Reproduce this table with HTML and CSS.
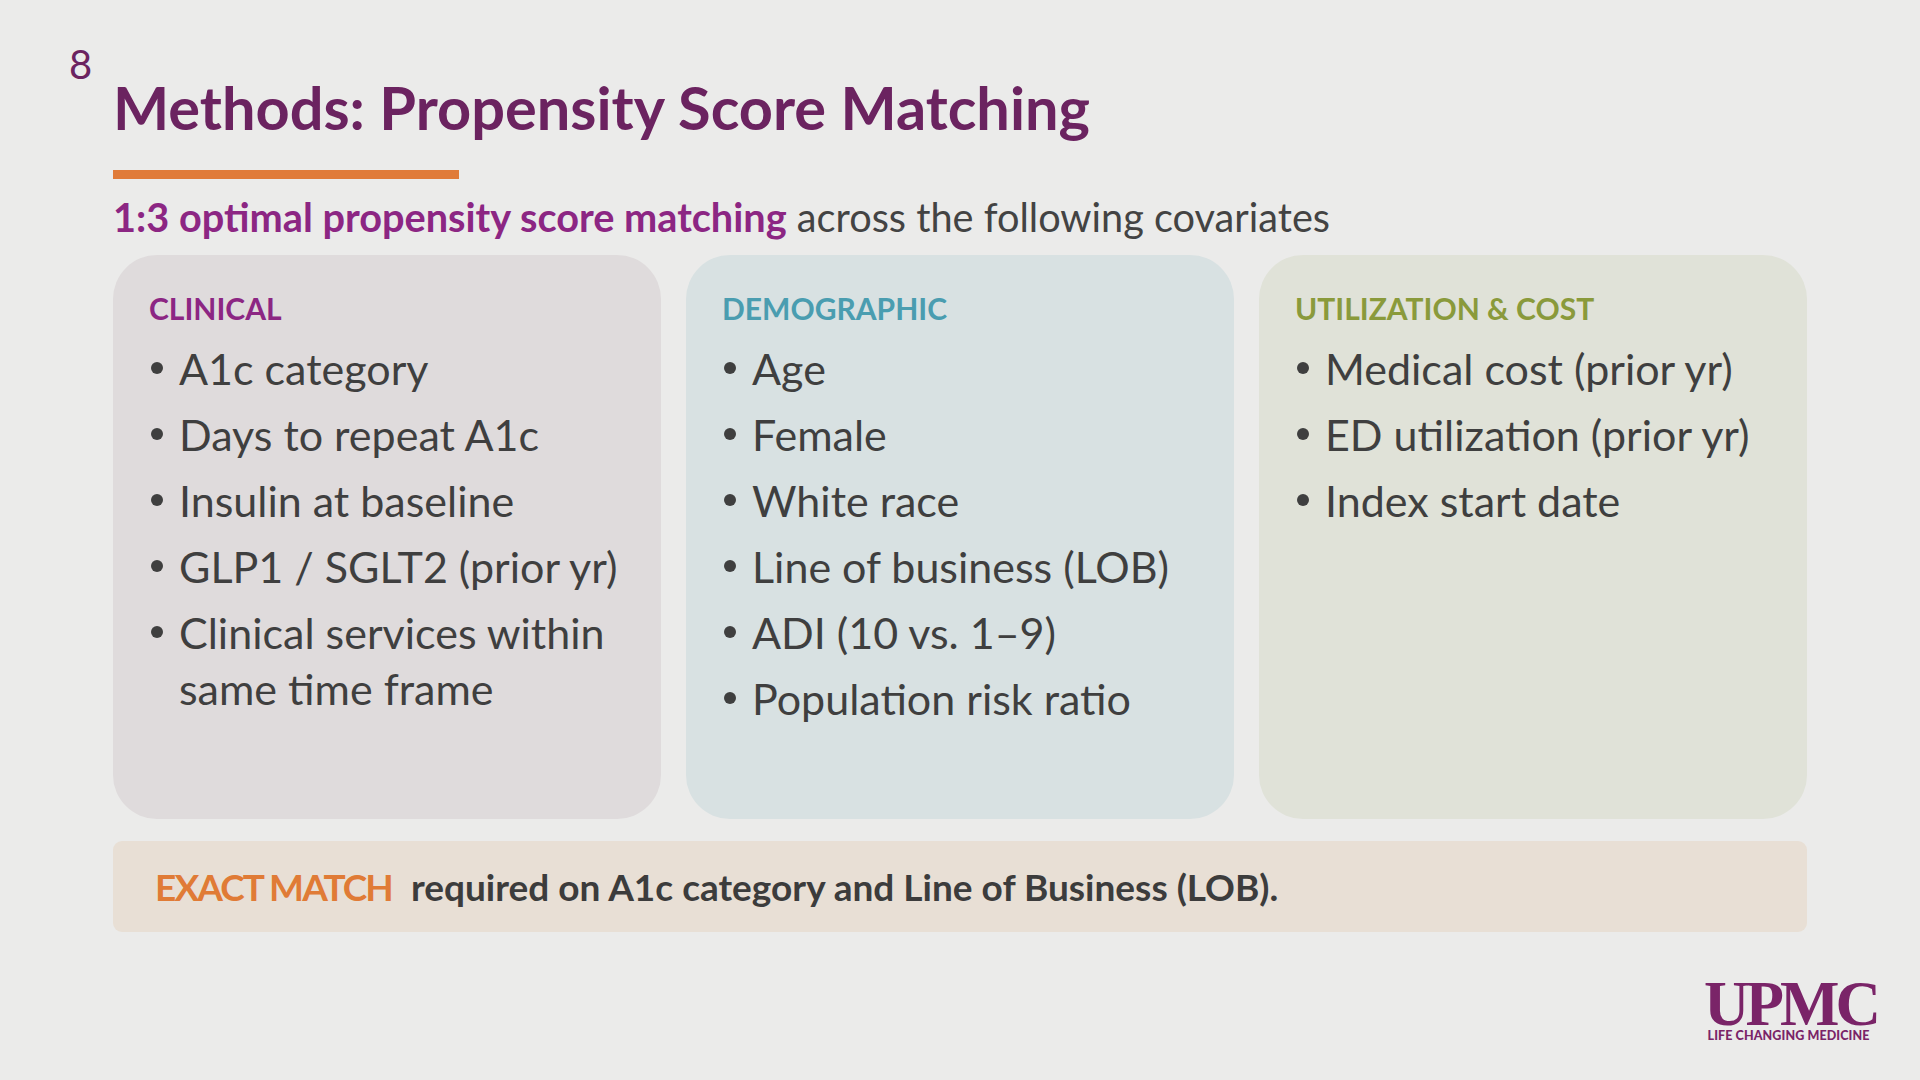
FILE: index.html
```html
<!DOCTYPE html>
<html lang="en">
<head>
<meta charset="utf-8">
<title>Methods: Propensity Score Matching</title>
<link rel="stylesheet" href="styles.css">
</head>
<body>
<div class="slide">
  <div class="slide-num">8</div>
  <h1 class="title">Methods: Propensity Score Matching</h1>
  <div class="accent-bar"></div>
  <p class="subtitle"><strong>1:3 optimal propensity score matching</strong> across the following covariates</p>

  <div class="cards">
    <section class="card card-clinical">
      <h2 class="card-head">CLINICAL</h2>
      <ul class="items">
        <li>A1c category</li>
        <li>Days to repeat A1c</li>
        <li>Insulin at baseline</li>
        <li>GLP1 / SGLT2 (prior yr)</li>
        <li>Clinical services within same time frame</li>
      </ul>
    </section>
    <section class="card card-demo">
      <h2 class="card-head">DEMOGRAPHIC</h2>
      <ul class="items">
        <li>Age</li>
        <li>Female</li>
        <li>White race</li>
        <li>Line of business (LOB)</li>
        <li>ADI (10 vs. 1–9)</li>
        <li>Population risk ratio</li>
      </ul>
    </section>
    <section class="card card-util">
      <h2 class="card-head">UTILIZATION &amp; COST</h2>
      <ul class="items">
        <li>Medical cost (prior yr)</li>
        <li>ED utilization (prior yr)</li>
        <li>Index start date</li>
      </ul>
    </section>
  </div>

  <div class="exact">
    <span class="exact-label">EXACT MATCH</span>
    <span class="exact-text">required on A1c category and Line of Business (LOB).</span>
  </div>

  <div class="logo-row">
    <div class="logo">
      <div class="logo-mark">UPMC</div>
      <div class="logo-tag">LIFE CHANGING MEDICINE</div>
    </div>
  </div>
</div>
</body>
</html>
```
FILE: styles.css
```css
html, body {
  margin: 0;
  padding: 0;
}
body {
  width: 1920px;
  height: 1080px;
  overflow: hidden;
  background: #ebebea;
  font-family: Lato, "Open Sans", sans-serif;
  color: #3f3f3f;
}
.slide {
  box-sizing: border-box;
  width: 1920px;
  height: 1080px;
  padding: 48px 113px 0 113px;
  display: flex;
  flex-direction: column;
}
.slide-num {
  margin-left: -44px;
  font-size: 40px;
  line-height: 32px;
  color: #6b2360;
}
.title {
  margin: 2px 0 0 0;
  font-size: 59.5px;
  line-height: 50px;
  font-weight: 700;
  color: #6b2360;
}
.accent-bar {
  margin-top: 38px;
  width: 346px;
  height: 9px;
  background: #e07b39;
}
.subtitle {
  margin: 13px 0 0 0;
  font-size: 39.7px;
  line-height: 50px;
  color: #434343;
}
.subtitle strong {
  color: #8c2683;
  font-weight: 700;
}
.cards {
  margin-top: 13px;
  display: grid;
  grid-template-columns: repeat(3, 1fr);
  gap: 25px;
  height: 564px;
}
.card {
  box-sizing: border-box;
  border-radius: 44px;
  padding: 35px 20px 0 36px;
}
.card-clinical { background: #dfdbdc; }
.card-demo { background: #d8e1e2; }
.card-util { background: #e0e2d8; }
.card-head {
  margin: 0;
  font-size: 30px;
  line-height: 36px;
  font-weight: 700;
}
.card-clinical .card-head { color: #8c2683; }
.card-demo .card-head { color: #4a9db0; }
.card-util .card-head { color: #8a9a3b; }
.items {
  list-style: none;
  margin: 15px 0 0 0;
  padding: 0;
}
.items li {
  display: flex;
  font-size: 43px;
  line-height: 56px;
  color: #3f3f3f;
  margin-bottom: 10px;
}
.items li::before {
  content: "";
  flex: 0 0 12px;
  width: 12px;
  height: 12px;
  border-radius: 50%;
  background: #3f3f3f;
  margin: 21px 16px 0 2px;
}
.exact {
  box-sizing: border-box;
  margin-top: 22px;
  height: 91px;
  border-radius: 9px;
  background: #e8dfd5;
  display: flex;
  align-items: center;
  padding-left: 42px;
  font-size: 37px;
  line-height: 42px;
  font-weight: 700;
}
.exact-label {
  color: #e07b36;
  margin-right: 19px;
  letter-spacing: -1.9px;
}
.exact-text {
  color: #3c3c3c;
}
.logo-row {
  display: flex;
  justify-content: flex-end;
  margin-top: 48px;
  margin-right: -66px;
}
.logo {
  display: flex;
  flex-direction: column;
  align-items: center;
  color: #7a2468;
}
.logo-mark {
  font-family: "Liberation Serif", "Times New Roman", serif;
  font-size: 63px;
  line-height: 48px;
  font-weight: 700;
  letter-spacing: -4px;
  margin-right: -4px;
}
.logo-tag {
  margin-top: 1px;
  font-size: 12.5px;
  line-height: 14px;
  font-weight: 900;
  letter-spacing: 0.1px;
}
```
